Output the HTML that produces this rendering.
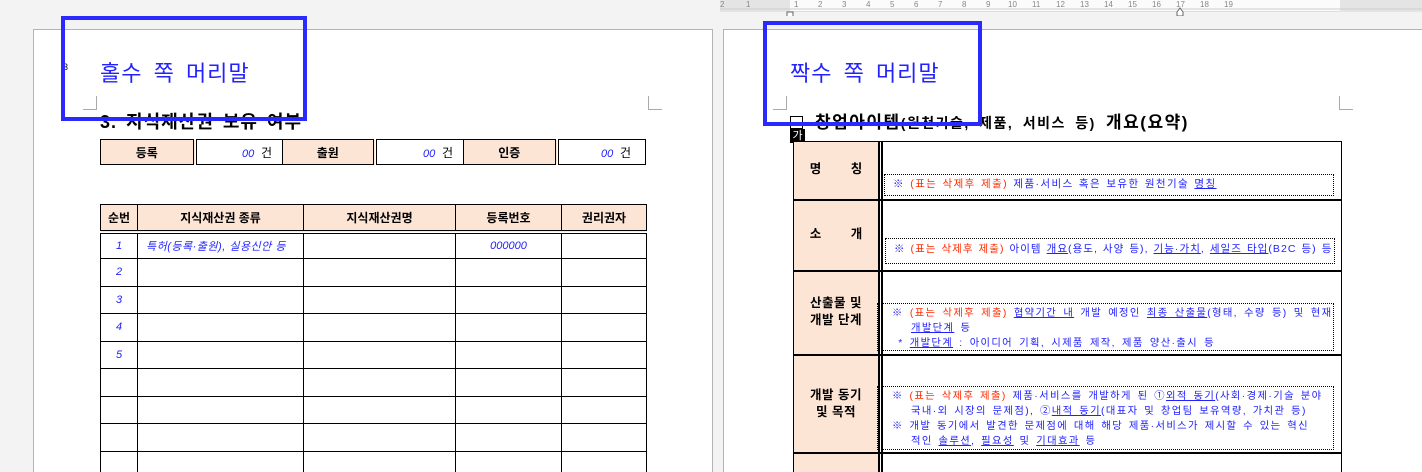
<!DOCTYPE html>
<html><head><meta charset="utf-8"><style>
*{margin:0;padding:0;box-sizing:border-box}
html{width:1422px;height:472px;overflow:hidden}
body{width:1422px;height:472px;overflow:hidden;background:#f3f3f3;position:relative;font-family:"Liberation Sans","Noto Sans CJK KR",sans-serif}
.a{position:absolute}
.page{position:absolute;background:#fff;border:1px solid #b4b4b4}
.blue{color:#2222ff}
.box{position:absolute;border:4px solid #2a2aff}
.pe{background:#fde5d6}
table{border-collapse:collapse;position:absolute}
td{border:1.5px solid #000;text-align:center;font-size:12px}
.it{font-style:italic;color:#2222ff;font-size:11px}
.dot{position:absolute;border:1px dotted #000;font-size:10.5px;line-height:15px;color:#2222ff;padding:2px 6px 2px 8px;white-space:nowrap}
.r{color:#ff2a00}
u{text-decoration:underline;text-decoration-color:#2222ff}
.lab{position:absolute;font-weight:bold;font-size:12.5px;text-align:center;line-height:17px}
.hl{position:absolute;background:#000}
.cm{position:absolute;border-color:#aaa;border-style:solid;width:14px;height:14px}
.in{display:inline-block;width:19px}
</style></head><body>
<div class="a" style="left:720px;top:0;width:702px;height:12px;background:#fbfbfb;border-bottom:1px solid #ddd"></div>
<div class="a" style="left:720px;top:0;width:70px;height:12px;background:#e4e4e4"></div>
<div class="a" style="left:1340px;top:0;width:82px;height:12px;background:#e4e4e4"></div>
<svg class="a" style="left:720px;top:0" width="702" height="16">
<line x1="0" y1="9" x2="702" y2="9" stroke="#ccc"/>
<g font-size="8" fill="#888" font-family="Liberation Sans">
<text x="0" y="7">2</text><text x="26" y="7">1</text><text x="74" y="7">1</text><text x="98" y="7">2</text><text x="122" y="7">3</text><text x="146" y="7">4</text><text x="170" y="7">5</text><text x="194" y="7">6</text><text x="218" y="7">7</text><text x="242" y="7">8</text><text x="266" y="7">9</text><text x="288" y="7">10</text><text x="312" y="7">11</text><text x="336" y="7">12</text><text x="360" y="7">13</text><text x="384" y="7">14</text><text x="408" y="7">15</text><text x="432" y="7">16</text><text x="456" y="7">17</text><text x="480" y="7">18</text><text x="504" y="7">19</text>
</g>
<path d="M67 12h6v5h-6z M457 12l3-4 3 4v4h-6z" fill="#fff" stroke="#666"/>
</svg>

<div class="page" style="left:33px;top:29px;width:680px;height:443px;border-bottom:none"></div>
<div class="page" style="left:723px;top:29px;width:710px;height:443px;border-bottom:none"></div>

<div class="a" style="left:63px;top:62px;font-size:9px">3</div>
<div class="a blue" style="left:100px;top:56px;font-size:22px;letter-spacing:1px;word-spacing:4px">홀수 쪽 머리말</div>
<div class="cm" style="left:83px;top:96px;border-width:0 1px 1px 0"></div>
<div class="cm" style="left:648px;top:96px;border-width:0 0 1px 1px"></div>
<div class="a" style="left:100px;top:108px;font-size:18px;font-weight:bold;letter-spacing:1px;word-spacing:3px">3. 지식재산권 보유 여부</div>
<div class="box" style="left:61px;top:16px;width:246px;height:105px"></div>

<table style="left:100px;top:139px;width:546px;height:26px">
<tr>
<td class="pe" style="width:94px;border-right:4px double #000;font-weight:bold">등록</td>
<td style="width:88px;text-align:right;padding-right:10px"><span class="it">00</span>&nbsp;&nbsp;건</td>
<td class="pe" style="width:92px;border-right:4px double #000;font-weight:bold">출원</td>
<td style="width:89px;text-align:right;padding-right:10px"><span class="it">00</span>&nbsp;&nbsp;건</td>
<td class="pe" style="width:93px;border-right:4px double #000;font-weight:bold">인증</td>
<td style="text-align:right;padding-right:14px"><span class="it">00</span>&nbsp;&nbsp;건</td>
</tr></table>

<table style="left:100px;top:204px;width:547px">
<tr class="pe" style="height:27px">
<td style="width:37px;font-weight:bold;border-bottom:4px double #000">순번</td>
<td style="width:166px;font-weight:bold;border-bottom:4px double #000">지식재산권 종류</td>
<td style="width:152px;font-weight:bold;border-bottom:4px double #000">지식재산권명</td>
<td style="width:106px;font-weight:bold;border-bottom:4px double #000">등록번호</td>
<td style="font-weight:bold;border-bottom:4px double #000">권리권자</td></tr>
<tr style="height:27px"><td class="it">1</td><td class="it" style="text-align:left;padding-left:8px;letter-spacing:0.5px">특허(등록·출원), 실용신안 등</td><td></td><td class="it">000000</td><td></td></tr>
<tr style="height:27.5px"><td class="it">2</td><td></td><td></td><td></td><td></td></tr>
<tr style="height:27.5px"><td class="it">3</td><td></td><td></td><td></td><td></td></tr>
<tr style="height:27.5px"><td class="it">4</td><td></td><td></td><td></td><td></td></tr>
<tr style="height:27.5px"><td class="it">5</td><td></td><td></td><td></td><td></td></tr>
<tr style="height:27.5px"><td></td><td></td><td></td><td></td><td></td></tr>
<tr style="height:27.5px"><td></td><td></td><td></td><td></td><td></td></tr>
<tr style="height:27.5px"><td></td><td></td><td></td><td></td><td></td></tr>
<tr style="height:27.5px"><td></td><td></td><td></td><td></td><td></td></tr>
</table>

<div class="a blue" style="left:790px;top:56px;font-size:22px;letter-spacing:1px;word-spacing:4px">짝수 쪽 머리말</div>
<div class="cm" style="left:773px;top:96px;border-width:0 1px 1px 0"></div>
<div class="cm" style="left:1339px;top:96px;border-width:0 0 1px 1px"></div>
<div class="a" style="left:790px;top:108px;font-size:17px;font-weight:bold;white-space:nowrap;letter-spacing:1.5px;word-spacing:4px"><span style="display:inline-block;width:13px;height:13px;border:1.5px solid #000;vertical-align:-1px;margin-right:12px"></span>창업아이템<span style="font-size:14px;letter-spacing:1.5px">(원천기술, 제품, 서비스 등)</span> 개요(요약)</div>
<div class="a" style="left:790px;top:129px;width:15px;height:14px;background:#000;color:#fff;font-size:11px;line-height:14px;text-align:center">가</div>
<div class="box" style="left:763px;top:21px;width:219px;height:105px"></div>

<div class="a pe" style="left:793px;top:141px;width:86px;height:340px"></div>
<div class="a" style="left:793px;top:141px;width:549px;height:340px;border:1.5px solid #000;border-bottom:none"></div>
<div class="hl" style="left:878px;top:141px;width:1.5px;height:340px"></div>
<div class="hl" style="left:881px;top:141px;width:1.5px;height:340px"></div>
<div class="hl" style="left:793px;top:199px;width:549px;height:1.5px"></div>
<div class="hl" style="left:793px;top:270px;width:549px;height:1.5px"></div>
<div class="hl" style="left:793px;top:354px;width:549px;height:1.5px"></div>
<div class="hl" style="left:793px;top:452px;width:549px;height:1.5px"></div>

<div class="lab" style="left:793px;top:161px;width:86px;word-spacing:26px">명 칭</div>
<div class="lab" style="left:793px;top:226px;width:86px;word-spacing:26px">소 개</div>
<div class="lab" style="left:793px;top:295px;width:86px;letter-spacing:0.5px">산출물 및<br>개발 단계</div>
<div class="lab" style="left:793px;top:387px;width:86px;letter-spacing:0.5px">개발 동기<br>및 목적</div>

<div class="dot" style="left:884px;top:174px;width:450px;height:22px;letter-spacing:1.4px;word-spacing:1px">※ <span class="r">(표는 삭제후 제출)</span> 제품·서비스 혹은 보유한 원천기술 <u>명칭</u></div>
<div class="dot" style="left:885px;top:238px;width:450px;height:26px;padding-top:3px;letter-spacing:1.05px;word-spacing:1px">※ <span class="r">(표는 삭제후 제출)</span> 아이템 <u>개요</u>(용도, 사양 등), <u>기능·가치</u>, <u>세일즈 타입</u>(B2C 등) 등</div>
<div class="dot" style="left:877px;top:303px;width:457px;height:48px;padding-left:14px;font-size:10.3px;letter-spacing:1.35px;word-spacing:2px">※ <span class="r">(표는 삭제후 제출)</span> <u>협약기간 내</u> 개발 예정인 <u>최종 산출물</u>(형태, 수량 등) 및 현재<br><span class="in"></span><u>개발단계</u> 등<br>&nbsp;* <u>개발단계</u> : 아이디어 기획, 시제품 제작, 제품 양산·출시 등</div>
<div class="dot" style="left:877px;top:386px;width:457px;height:64px;padding-left:14px;font-size:10.3px;letter-spacing:1.4px;word-spacing:1.5px">※ <span class="r">(표는 삭제후 제출)</span> 제품·서비스를 개발하게 된 ①<u>외적 동기</u>(사회·경제·기술 분야<br><span class="in"></span>국내·외 시장의 문제점), ②<u>내적 동기</u>(대표자 및 창업팀 보유역량, 가치관 등)<br>※ 개발 동기에서 발견한 문제점에 대해 해당 제품·서비스가 제시할 수 있는 혁신<br><span class="in"></span>적인 <u>솔루션</u>, <u>필요성</u> 및 <u>기대효과</u> 등</div>
</body></html>
